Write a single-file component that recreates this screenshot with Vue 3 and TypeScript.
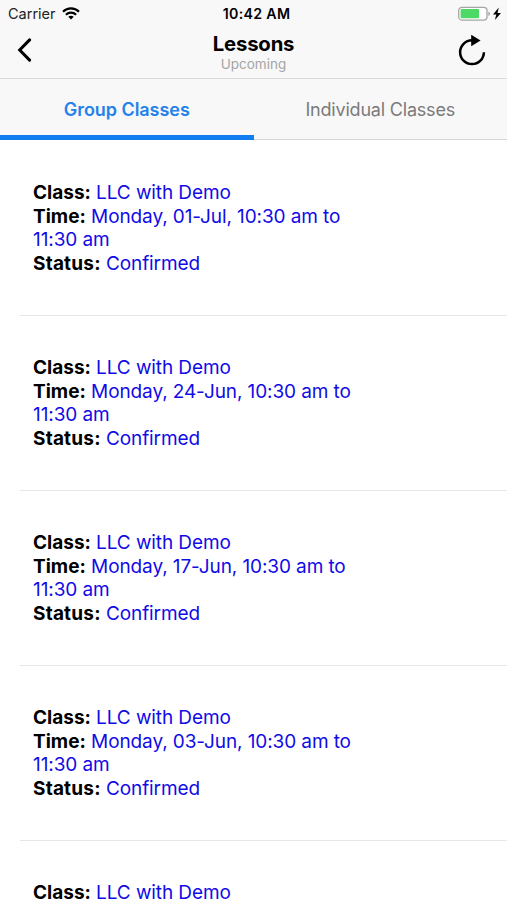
<script setup lang="ts">
import { ref } from 'vue'

interface Lesson {
  name: string
  date: string
  time: string
  status: string
}

const tabs: string[] = ['Group Classes', 'Individual Classes']
const activeTab = ref<number>(0)

const lessons: Lesson[] = ['01-Jul', '24-Jun', '17-Jun', '03-Jun', '27-May'].map((day) => ({
  name: 'LLC with Demo',
  date: `Monday, ${day},`,
  time: '10:30 am to 11:30 am',
  status: 'Confirmed',
}))
</script>

<template>
  <main class="screen">
    <header class="top">
      <div class="status-bar">
        <div class="carrier">
          <span>Carrier</span>
          <svg width="18" height="13" viewBox="0 0 18 13" fill="none" stroke="#000" stroke-width="2.1">
            <path d="M1 4.8C5.5.2 12.5.2 17 4.8" />
            <path d="M3.9 7.8C6.7 4.9 11.3 4.9 14.1 7.8" />
            <path d="M9 12.5 6.3 9.7C7.8 8.3 10.2 8.3 11.7 9.7Z" fill="#000" stroke="none" />
          </svg>
        </div>
        <span class="clock">10:42 AM</span>
        <div class="power">
          <svg width="44" height="16" viewBox="0 0 44 16">
            <rect x=".7" y="1.3" width="28.3" height="12.8" rx="3.3" fill="#fff" stroke="#a5a5a5" stroke-width="1.3" />
            <rect x="2.6" y="3.1" width="18.4" height="9.2" rx="1" fill="#4cd964" />
            <path d="M30.3 5.4c2.2.8 2.2 3.7 0 4.5z" fill="#a5a5a5" />
            <path d="M40.8 1.6 35 8.600h3.300l-1.400 5.500L43 6.900h-3.500z" fill="#000" />
          </svg>
        </div>
      </div>
      <div class="nav-bar">
        <button class="icon-button back" aria-label="Back">
          <svg width="16" height="24" viewBox="0 0 16 24" fill="none" stroke="#000" stroke-width="3">
            <path d="M12.6 1.9 2.7 12l9.9 10.1" stroke-linecap="round" stroke-linejoin="miter" />
          </svg>
        </button>
        <div class="heading">
          <h1>Lessons</h1>
          <p>Upcoming</p>
        </div>
        <button class="icon-button refresh" aria-label="Refresh">
          <svg width="28" height="32" viewBox="0 0 28 32">
            <path d="M14 6.3A11.9 11.9 0 1 0 25.9 18.2" fill="none" stroke="#000" stroke-width="2.5" />
            <path d="M13.2.8v11.4L22.6 6.5z" fill="#000" />
          </svg>
        </button>
      </div>
    </header>

    <nav class="tabs">
      <button
        v-for="(tab, i) in tabs"
        :key="tab"
        class="tab"
        :class="{ active: activeTab === i }"
        @click="activeTab = i"
      >
        <span>{{ tab }}</span>
      </button>
    </nav>

    <ul class="lessons">
      <li v-for="lesson in lessons" :key="lesson.date" class="lesson">
        <div class="details">
          <p><strong>Class:</strong> {{ lesson.name }}</p>
          <p><strong>Time:</strong> {{ lesson.date }} {{ lesson.time }}</p>
          <p><strong class="wide">Status:</strong> {{ lesson.status }}</p>
        </div>
      </li>
    </ul>
  </main>
</template>

<style>
body {
  margin: 0;
  background: #fff;
}
</style>

<style scoped>
.screen {
  box-sizing: border-box;
  height: 900px;
  overflow: hidden;
  background: #fff;
  color: #000;
  font-family: Inter, Roboto, sans-serif;
}

.screen p,
.screen h1 {
  margin: 0;
}

.top {
  box-sizing: border-box;
  height: 79px;
  border-bottom: 1px solid #dadada;
  background: #f8f8f8;
}

.status-bar {
  display: grid;
  grid-template-columns: 1fr auto 1fr;
  align-items: center;
  height: 27px;
  padding: 0 5px 0 8px;
}

.carrier {
  display: flex;
  align-items: center;
  gap: 6px;
  color: #222;
  font-size: 14.5px;
}

.clock {
  padding-left: 3px;
  font-size: 14.2px;
  font-weight: 600;
  letter-spacing: 0.3px;
}

.power {
  display: flex;
  justify-content: flex-end;
}

.nav-bar {
  display: grid;
  grid-template-columns: 60px 1fr 60px;
  height: 51px;
}

.icon-button {
  display: flex;
  padding: 0;
  border: 0;
  background: none;
}

.back {
  padding: 11px 0 0 17px;
}

.refresh {
  padding: 7px 0 0 11px;
}

.heading {
  padding-top: 4px;
  text-align: center;
}

.heading h1 {
  font-size: 20.3px;
  font-weight: 700;
  line-height: 25px;
  letter-spacing: -0.15px;
}

.heading p {
  color: #a5a5a5;
  font-size: 13.5px;
  line-height: 16px;
}

.tabs {
  display: grid;
  grid-template-columns: 1fr 1fr;
  grid-template-rows: 61px;
  background: #f8f8f8;
}

.tab {
  display: flex;
  justify-content: center;
  box-sizing: border-box;
  padding: 19px 0 0;
  border: 0;
  border-bottom: 1px solid #d6d6d6;
  background: none;
  color: #7b7b7b;
  font: 400 18px/24px Inter, sans-serif;
  letter-spacing: -0.2px;
}

.tab.active {
  border-bottom: 5px solid #117df0;
  color: #2482ea;
  font-weight: 600;
  letter-spacing: -0.05px;
}

.lessons {
  margin: 0;
  padding: 1px 0 0 20px;
  list-style: none;
}

.lesson {
  box-sizing: border-box;
  height: 175px;
  padding: 40px 0 0 13px;
  border-bottom: 1px solid #e7e7e7;
}

.details {
  width: 330px;
  color: #110be6;
  font-size: 19px;
  line-height: 23.5px;
  letter-spacing: -0.1px;
}

.details strong {
  color: #000;
  font-weight: 700;
  letter-spacing: 0;
}

.details .wide {
  letter-spacing: 0.2px;
}
</style>
